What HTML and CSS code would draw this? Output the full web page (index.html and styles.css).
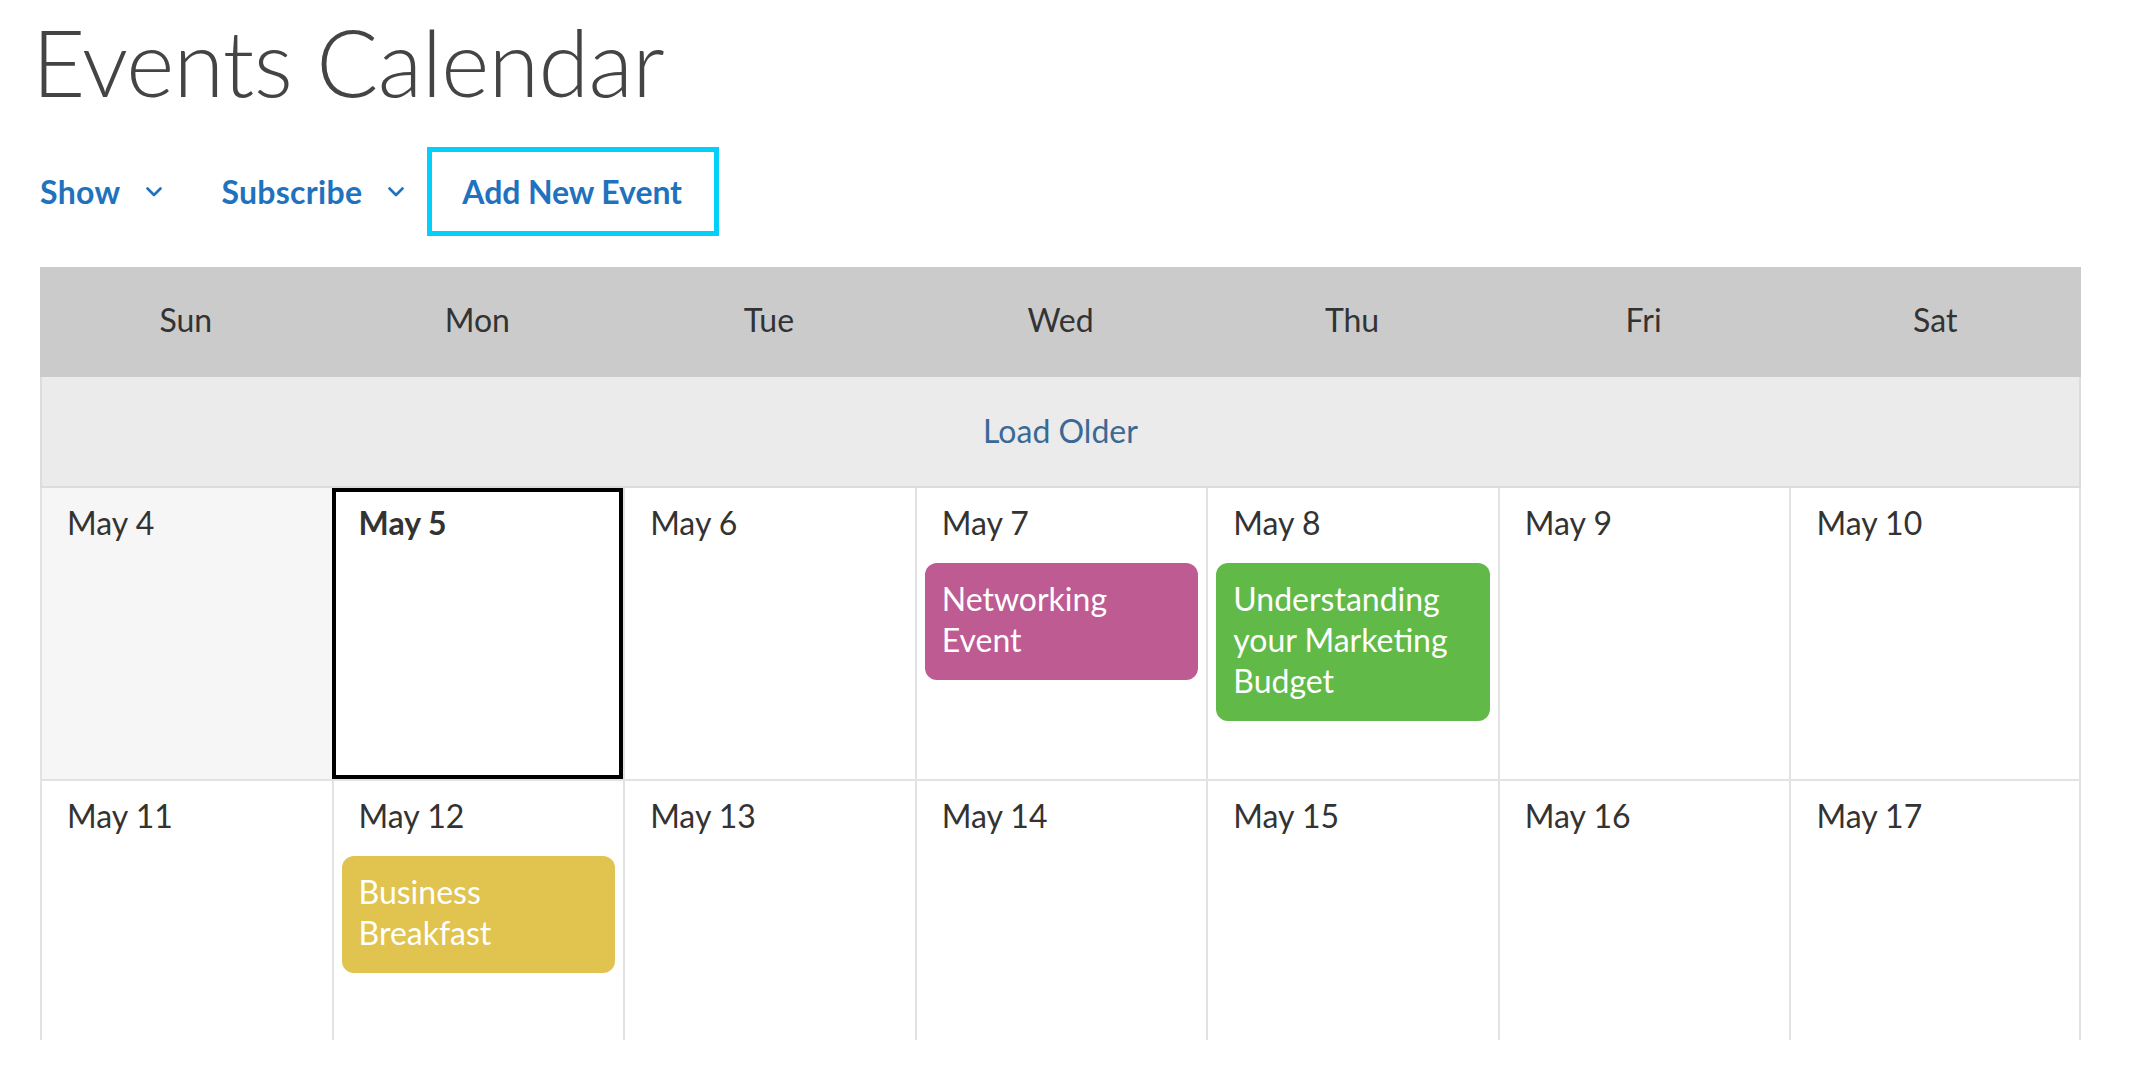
FILE: index.html
```html
<!DOCTYPE html>
<html lang="en">
<head>
<meta charset="utf-8">
<title>Events Calendar</title>
<link rel="stylesheet" href="styles.css">
</head>
<body>
<div class="page">
  <h1 class="title">Events Calendar</h1>
  <nav class="toolbar">
    <button class="menu" type="button">Show
      <svg class="chev" viewBox="0 0 16 10" width="16" height="10"><polyline points="1.5,1.5 8,8 14.5,1.5"/></svg>
    </button>
    <button class="menu" type="button">Subscribe
      <svg class="chev" viewBox="0 0 16 10" width="16" height="10"><polyline points="1.5,1.5 8,8 14.5,1.5"/></svg>
    </button>
    <a class="add" href="#">Add New Event</a>
  </nav>

  <div class="calendar">
    <div class="weekdays">
      <div class="wd">Sun</div>
      <div class="wd">Mon</div>
      <div class="wd">Tue</div>
      <div class="wd">Wed</div>
      <div class="wd">Thu</div>
      <div class="wd">Fri</div>
      <div class="wd">Sat</div>
    </div>
    <div class="load-older"><a href="#">Load Older</a></div>

    <div class="week">
      <div class="day past"><div class="date">May 4</div></div>
      <div class="day today"><div class="date">May 5</div></div>
      <div class="day"><div class="date">May 6</div></div>
      <div class="day"><div class="date">May 7</div>
        <div class="event purple">Networking Event</div>
      </div>
      <div class="day"><div class="date">May 8</div>
        <div class="event green">Understanding your Marketing Budget</div>
      </div>
      <div class="day"><div class="date">May 9</div></div>
      <div class="day"><div class="date">May 10</div></div>
    </div>

    <div class="week last">
      <div class="day"><div class="date">May 11</div></div>
      <div class="day"><div class="date">May 12</div>
        <div class="event yellow">Business Breakfast</div>
      </div>
      <div class="day"><div class="date">May 13</div></div>
      <div class="day"><div class="date">May 14</div></div>
      <div class="day"><div class="date">May 15</div></div>
      <div class="day"><div class="date">May 16</div></div>
      <div class="day"><div class="date">May 17</div></div>
    </div>
  </div>
</div>
</body>
</html>
```

FILE: styles.css
```css
* {
  box-sizing: border-box;
}

html, body {
  margin: 0;
  padding: 0;
  background: #ffffff;
}

body {
  font-family: "Lato", "Noto Sans", sans-serif;
  color: #333333;
}

.page {
  padding: 0 51px 0 40px;
}

.title {
  margin: 8px 0 0 -8px;
  font-size: 92px;
  font-weight: 300;
  line-height: 108px;
  color: #444444;
  letter-spacing: -0.7px;
}

.toolbar {
  display: flex;
  align-items: center;
  height: 89px;
  margin-top: 31px;
}

.menu {
  display: flex;
  align-items: center;
  gap: 26px;
  height: 89px;
  padding: 0;
  margin: 0 59px 0 0;
  border: 0;
  background: none;
  font-family: inherit;
  font-size: 32px;
  font-weight: 700;
  letter-spacing: 0.3px;
  color: #1f72bd;
  cursor: pointer;
}

.menu:nth-child(2) {
  margin-right: 23px;
}

.chev {
  display: block;
  fill: none;
  stroke: #1f72bd;
  stroke-width: 2.6;
  stroke-linecap: round;
  stroke-linejoin: round;
}

.add {
  display: flex;
  align-items: center;
  height: 89px;
  padding: 0 32px 0 30px;
  border: 5px solid #04cff9;
  font-size: 32px;
  font-weight: 700;
  letter-spacing: -0.1px;
  color: #1f72bd;
  text-decoration: none;
}

.calendar {
  margin-top: 31px;
}

.weekdays {
  display: grid;
  grid-template-columns: repeat(7, 1fr);
  height: 110px;
  background: #cbcbcb;
}

.wd {
  display: flex;
  align-items: center;
  justify-content: center;
  font-size: 32px;
  color: #333333;
  padding-bottom: 6px;
}

.load-older {
  display: flex;
  align-items: center;
  justify-content: center;
  height: 111px;
  padding-bottom: 2px;
  background: #ebebeb;
  border-left: 2px solid #dcdcdc;
  border-right: 2px solid #dcdcdc;
  border-bottom: 2px solid #dcdcdc;
}

.load-older a {
  font-size: 32px;
  color: #3a6995;
  text-decoration: none;
}

.week {
  display: grid;
  grid-template-columns: repeat(7, 1fr);
  height: 293px;
  border-bottom: 2px solid #e2e2e2;
}

.week.last {
  height: 259px;
  border-bottom: 0;
}

.day {
  border-left: 2px solid #e2e2e2;
  padding: 14px 8px 0 8px;
  min-width: 0;
}

.day:last-child {
  border-right: 2px solid #e2e2e2;
}

.day.past {
  background: #f6f6f6;
}

.day.today {
  outline: 4px solid #000000;
  outline-offset: -4px;
}

.day.today .date {
  font-weight: 700;
}

.date {
  padding-left: 17px;
  font-size: 32px;
  line-height: 41px;
  color: #333333;
}

.event {
  margin-top: 20px;
  padding: 15px 16px 20px 17px;
  border-radius: 12px;
  font-size: 32px;
  line-height: 41px;
  color: #ffffff;
}

.event.purple {
  background: #be5b92;
}

.event.green {
  background: #61ba47;
}

.event.yellow {
  background: #e0c44f;
}
```
